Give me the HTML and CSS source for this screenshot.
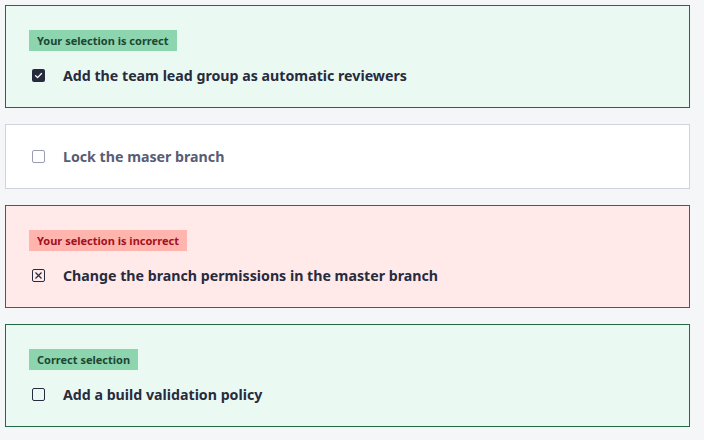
FILE: index.html
```html
<!DOCTYPE html>
<html>
<head>
<meta charset="utf-8">
<link rel="stylesheet" href="styles.css">
</head>
<body>
<div class="list">
  <div class="card card-correct">
    <span class="badge badge-green">Your selection is correct</span>
    <div class="row">
      <span class="box box-checked"><svg viewBox="0 0 13 13" width="13" height="13"><path d="M3.6 6.7 L5.6 8.6 L9.5 4.5" fill="none" stroke="#fff" stroke-width="1.3" stroke-linecap="round" stroke-linejoin="round"/></svg></span>
      <span class="label">Add the team lead group as automatic reviewers</span>
    </div>
  </div>
  <div class="card card-plain">
    <div class="row">
      <span class="box box-muted"></span>
      <span class="label label-muted">Lock the maser branch</span>
    </div>
  </div>
  <div class="card card-wrong">
    <span class="badge badge-red">Your selection is incorrect</span>
    <div class="row">
      <span class="box box-x"><svg viewBox="0 0 13 13" width="13" height="13"><path d="M3.5 3.5 L9.5 9.5 M9.5 3.5 L3.5 9.5" fill="none" stroke="#272b3e" stroke-width="1.2"/></svg></span>
      <span class="label">Change the branch permissions in the master branch</span>
    </div>
  </div>
  <div class="card card-correct">
    <span class="badge badge-green">Correct selection</span>
    <div class="row">
      <span class="box box-empty"></span>
      <span class="label">Add a build validation policy</span>
    </div>
  </div>
</div>
</body>
</html>
```
FILE: styles.css
```css
html, body {
  margin: 0;
  padding: 0;
  background: #f5f6f8;
}
body {
  padding: 5px;
  font-family: "Noto Sans", "DejaVu Sans", sans-serif;
  color: #272b3e;
}
.list {
  width: 685px;
  display: flex;
  flex-direction: column;
  gap: 16px;
}
.card {
  box-sizing: border-box;
  border: 1px solid #cfd3e0;
  background: #fff;
  padding: 24px 23px;
  display: flex;
  flex-direction: column;
  align-items: flex-start;
  gap: 17px;
}
.card-correct {
  background: #ebf9f3;
  border-color: #1f6b47;
}
.card-wrong {
  background: #ffe9e9;
  border-color: #c8261f;
}
.badge {
  font-size: 11px;
  font-weight: 700;
  line-height: 21px;
  height: 21px;
  padding: 0 8px;
}
.badge-green {
  background: #8cd5ae;
  color: #1d4633;
}
.badge-red {
  background: #ffb5ae;
  color: #a3101c;
}
.row {
  display: flex;
  align-items: center;
  height: 15px;
}
.box {
  box-sizing: border-box;
  width: 13px;
  height: 13px;
  margin-left: 3px;
  margin-right: 18px;
  border-radius: 2px;
  display: inline-flex;
  flex: none;
}
.box svg { display: block; }
.box-checked {
  background: #272b3e;
}
.box-muted {
  border: 1.5px solid #9a9db4;
}
.box-empty {
  border: 1.5px solid #272b3e;
}
.box-x {
  border: 1px solid #272b3e;
}
.box-x svg { margin: -1px; }
.label {
  font-size: 14.2px;
  font-weight: 700;
  line-height: 15px;
}
.label-muted {
  color: #585c76;
}
```
